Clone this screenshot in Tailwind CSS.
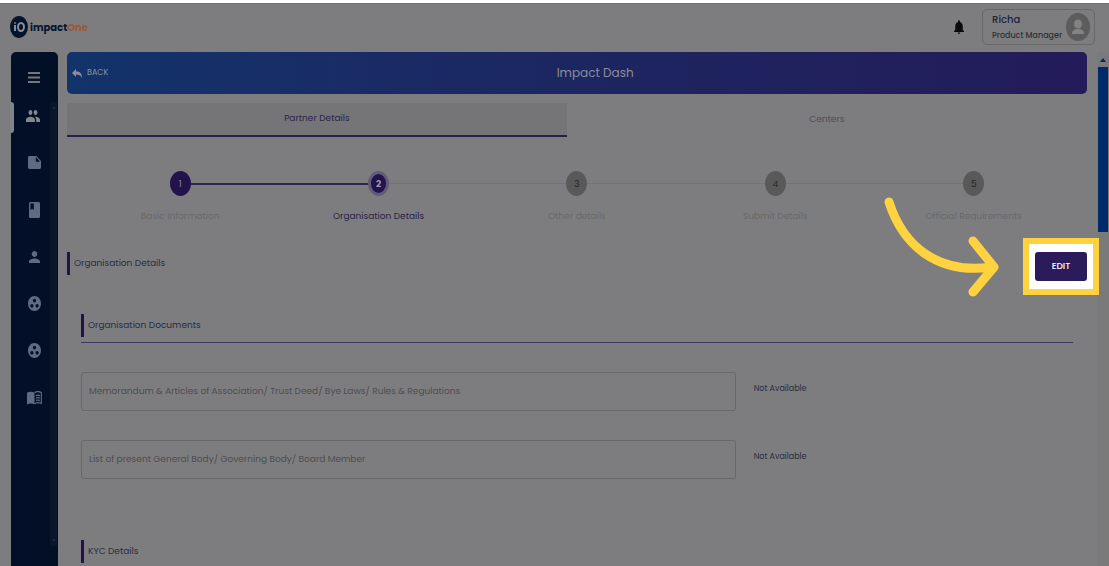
<!DOCTYPE html>
<html lang="en">
<head>
    <meta charset="UTF-8" />
    <meta name="viewport" content="width=device-width, initial-scale=1.0"/>
    <title>impactOne - Impact Dash</title>
    <script src="https://cdn.jsdelivr.net/npm/@tailwindcss/browser@4"></script>
    <style>
        body { font-family: Poppins, Roboto, sans-serif; }
    </style>
</head>
<body class="flex h-screen flex-col overflow-hidden border-t-3 border-white bg-[#7d7d7f] text-[#2a2d3f]">

<!-- Header -->
<header class="flex h-[49px] shrink-0 items-center justify-between border-t border-[#727274] pr-[14px] pb-[2px] pl-[10px]">
    <a href="#" class="flex items-center gap-[2px]">
        <svg class="h-[22px] w-[18px]" viewBox="0 0 18 22" preserveAspectRatio="none" aria-hidden="true">
            <ellipse cx="9" cy="11" rx="9" ry="11" fill="#03142e"/>
            <rect x="4" y="9" width="2" height="6" fill="#8b8d93"/>
            <rect x="4" y="6" width="2" height="2" fill="#8a5030"/>
            <ellipse cx="11" cy="11" rx="3" ry="4" fill="none" stroke="#8b8d93" stroke-width="2"/>
        </svg>
        <span class="text-[10px] font-bold text-[#061530]">impact<span class="text-[#9c583a]">One</span></span>
    </a>
    <div class="flex items-center gap-[18px]">
        <button type="button" aria-label="Notifications">
            <svg class="h-[14px] w-[10px]" viewBox="4 2 16 20" preserveAspectRatio="none" fill="#0b0b0d">
                <path d="M12 22c1.1 0 2-.9 2-2h-4c0 1.1.9 2 2 2zm6-6v-5c0-3.07-1.63-5.64-4.5-6.32V4c0-.83-.67-1.5-1.5-1.5s-1.500.67-1.500 1.500v.68C7.640 5.360 6 7.920 6 11v5l-2 2v1h16v-1l-2-2z"/>
            </svg>
        </button>
        <button type="button" class="flex h-[36px] items-center gap-[4px] rounded-[5px] border border-[#68686a] pr-[4px] pl-[9px] text-left">
            <span class="flex flex-col gap-[3px] leading-[13px]">
                <span class="text-[10px] font-medium text-[#20233c]">Richa</span>
                <span class="text-[8px] font-medium text-[#303034]">Product Manager</span>
            </span>
            <svg class="h-[28px] w-[24px]" viewBox="0 0 24 28" aria-hidden="true">
                <ellipse cx="12" cy="14" rx="12" ry="14" fill="#5c5c5d"/>
                <ellipse cx="12" cy="11" rx="4" ry="4.500" fill="#828283"/>
                <path d="M6 21v-1c0-2.500 3-4 6-4s6 1.500 6 4v1z" fill="#828283"/>
            </svg>
        </button>
    </div>
</header>

<div class="flex min-h-0 flex-1">
    <!-- Sidebar -->
    <nav class="relative ml-[11px] flex w-[47px] shrink-0 flex-col items-center rounded-t-[5px] bg-[#020f26] pr-px text-[#5d6b85]">
        <button type="button" aria-label="Menu" class="flex h-[40px] items-end justify-center pb-[9px]">
            <svg class="h-[11px] w-[12px]" viewBox="0 0 12 11" stroke="#74777f" stroke-width="2"><path d="M0 1h12M0 5.500h12M0 10h12"/></svg>
        </button>
        <a href="#" aria-label="Partners" class="flex h-[47px] items-center pr-[2px] text-[#85888d]">
            <svg class="h-[12px] w-[14px]" viewBox="1 5 22 14" preserveAspectRatio="none" fill="currentColor">
                <path d="M16 11c1.660 0 2.990-1.340 2.990-3S17.660 5 16 5s-3 1.340-3 3 1.340 3 3 3zm-8 0c1.660 0 2.990-1.340 2.990-3S9.660 5 8 5 5 6.340 5 8s1.340 3 3 3zm0 2c-2.330 0-7 1.170-7 3.500V19h14v-2.500c0-2.330-4.670-3.500-7-3.500zm8 0c-.29 0-.62.020-.97.050 1.160.84 1.970 1.970 1.970 3.450V19h6v-2.500c0-2.330-4.670-3.500-7-3.500z"/>
            </svg>
        </a>
        <a href="#" aria-label="Notes" class="flex h-[47px] items-center">
            <svg class="h-[13px] w-[13px]" viewBox="2 3 20 18" preserveAspectRatio="none" fill="currentColor">
                <path d="M15 3H4c-1.100 0-2 .9-2 2v14c0 1.100.9 2 2 2h16c1.100 0 2-.9 2-2v-9l-7-7zm-1 8V4.500l6.500 6.500H14z"/>
            </svg>
        </a>
        <a href="#" aria-label="Book" class="flex h-[47px] items-center">
            <svg class="h-[16px] w-[11px]" viewBox="4 2 16 20" preserveAspectRatio="none" fill="currentColor">
                <path d="M18 2H6c-1.100 0-2 .9-2 2v16c0 1.100.9 2 2 2h12c1.100 0 2-.9 2-2V4c0-1.100-.9-2-2-2zM6 4h5v8l-2.500-1.500L6 12V4z"/>
            </svg>
        </a>
        <a href="#" aria-label="Profile" class="flex h-[47px] items-center">
            <svg class="h-[12px] w-[11px]" viewBox="4 4 16 16" preserveAspectRatio="none" fill="currentColor">
                <path d="M12 12c2.210 0 4-1.790 4-4s-1.790-4-4-4-4 1.790-4 4 1.790 4 4 4zm0 2c-2.670 0-8 1.340-8 4v2h16v-2c0-2.660-5.330-4-8-4z"/>
            </svg>
        </a>
        <a href="#" aria-label="Groups" class="flex h-[47px] items-center">
            <svg class="h-[15px] w-[13px]" viewBox="2 2 20 20" preserveAspectRatio="none" fill="currentColor">
                <path d="M12 2C6.480 2 2 6.480 2 12s4.480 10 10 10 10-4.480 10-10S17.520 2 12 2zM8 17.500c-1.380 0-2.500-1.120-2.500-2.500s1.120-2.500 2.500-2.500 2.500 1.120 2.500 2.500-1.120 2.500-2.500 2.500zM9.500 8c0-1.380 1.120-2.500 2.500-2.500s2.500 1.120 2.500 2.500-1.120 2.500-2.500 2.500S9.500 9.380 9.500 8zm6.500 9.500c-1.380 0-2.500-1.120-2.500-2.500s1.120-2.500 2.500-2.500 2.500 1.120 2.500 2.500-1.120 2.500-2.500 2.500z"/>
            </svg>
        </a>
        <a href="#" aria-label="Teams" class="flex h-[47px] items-center">
            <svg class="h-[15px] w-[13px]" viewBox="2 2 20 20" preserveAspectRatio="none" fill="currentColor">
                <path d="M12 2C6.480 2 2 6.480 2 12s4.480 10 10 10 10-4.480 10-10S17.520 2 12 2zM8 17.500c-1.380 0-2.500-1.120-2.500-2.500s1.120-2.500 2.500-2.500 2.500 1.120 2.500 2.500-1.120 2.500-2.500 2.500zM9.500 8c0-1.380 1.120-2.500 2.500-2.500s2.500 1.120 2.500 2.500-1.120 2.500-2.500 2.500S9.500 9.380 9.500 8zm6.500 9.500c-1.380 0-2.500-1.120-2.500-2.500s1.120-2.500 2.500-2.500 2.500 1.120 2.500 2.500-1.120 2.500-2.500 2.500z"/>
            </svg>
        </a>
        <a href="#" aria-label="Guide" class="flex h-[47px] items-center">
            <svg class="h-[14px] w-[15px]" viewBox="1 4 22 17" preserveAspectRatio="none">
                <path d="M1 6c3-1.600 8-1.600 11 0v14.500c-3-1.600-8-1.600-11 0z" fill="currentColor"/>
                <path d="M12 6c3-1.500 7-1.500 10 0v13c-3-1-7-1-10 .5M14 9.500c2-.7 4-.7 6 0M14 12.500c2-.7 4-.7 6 0M14 15.500c2-.7 4-.7 6 0" fill="none" stroke="currentColor" stroke-width="1.600"/>
            </svg>
        </a>
        <!-- active marker and inner scrollbar -->
        <span class="absolute top-[50px] left-[-1px] h-[31px] w-[4px] rounded-r-[3px] bg-[#7f848a]"></span>
        <span class="absolute top-[50px] right-px bottom-[20px] flex w-[7px] flex-col items-center justify-between bg-[#0b1529] py-[4px]">
            <svg class="h-[3px] w-[4px]" viewBox="0 0 4 3" fill="#0b2a5c"><path d="M0 3l2-3 2 3z"/></svg>
            <svg class="h-[3px] w-[4px]" viewBox="0 0 4 3" fill="#0b2a5c"><path d="M0 0l2 3 2-3z"/></svg>
        </span>
    </nav>

    <!-- Content -->
    <main class="ml-[9px] min-w-0 flex-1 text-[9px]">
        <div class="flex h-[42px] items-center rounded-[5px] bg-linear-to-r from-[#12336b] via-[#1c2660] to-[#231b5a] px-[5px] text-[#8b8d9c]">
            <button type="button" class="flex items-center gap-[5px] text-[8px]">
                <svg class="h-[9px] w-[10px]" viewBox="0 0 10 9" fill="currentColor" aria-hidden="true"><path d="M0 4l4-4v2.300c4 .2 6 2.500 6 6.700-1.200-2.500-3-3.400-6-3.400V8z"/></svg>
                BACK
            </button>
            <h1 class="flex-1 text-center text-[12px]">Impact Dash</h1>
        </div>

        <div class="mt-[9px] flex h-[34px]">
            <button type="button" class="w-[49%] border-b-2 border-[#2a1d50] bg-[#757577] text-[#2c2450]">Partner Details</button>
            <button type="button" class="flex-1 text-[#4f4f54]">Centers</button>
        </div>

        <ol class="mt-[34px] grid grid-cols-5 px-[14px] text-center leading-[16px] text-[#68686a]">
            <li class="relative flex flex-col items-center gap-[12px]">
                <span class="absolute top-[12px] left-1/2 h-[2px] w-full bg-[#2f2551]"></span>
                <span class="relative flex h-[25px] w-[21px] items-center justify-center rounded-[50%] bg-[#23134c] text-[#8b8798]">1</span>
                Basic Information
            </li>
            <li class="relative flex flex-col items-center gap-[12px] text-[#2a2247]">
                <span class="absolute top-[12px] left-1/2 h-px w-full bg-[#737376]"></span>
                <span class="relative flex h-[25px] w-[21px] items-center justify-center rounded-[50%] border-3 border-[#625c78] bg-[#23134c] font-bold text-[#9a97a6]">2</span>
                Organisation Details
            </li>
            <li class="relative flex flex-col items-center gap-[12px]">
                <span class="absolute top-[12px] left-1/2 h-px w-full bg-[#737376]"></span>
                <span class="relative flex h-[25px] w-[21px] items-center justify-center rounded-[50%] bg-[#59595a] text-[#252527]">3</span>
                Other details
            </li>
            <li class="relative flex flex-col items-center gap-[12px]">
                <span class="absolute top-[12px] left-1/2 h-px w-full bg-[#737376]"></span>
                <span class="relative flex h-[25px] w-[21px] items-center justify-center rounded-[50%] bg-[#59595a] text-[#252527]">4</span>
                Submit Details
            </li>
            <li class="relative flex flex-col items-center gap-[12px]">
                <span class="relative flex h-[25px] w-[21px] items-center justify-center rounded-[50%] bg-[#59595a] text-[#252527]">5</span>
                Official Requirements
            </li>
        </ol>

        <div class="mt-[28px] flex items-start justify-between">
            <h2 class="border-l-3 border-[#23134c] pl-[4px] leading-[23px]">Organisation Details</h2>
            <div class="relative">
                <span class="absolute -inset-x-[12px] -inset-y-[14px] border-[6px] border-[#ffd23f] bg-white"></span>
                <button type="button" class="relative block h-[29px] w-[52px] rounded-[3px] bg-[#2b1b5a] font-medium text-white">EDIT</button>
                <svg class="absolute top-[-57px] right-[87px] h-[105px] w-[120px]" viewBox="880 195 120 105" fill="none" stroke="#ffd23f" stroke-width="9" stroke-linecap="round" stroke-linejoin="round" aria-hidden="true">
                    <path d="M889 202C903 246 938 275 992 267"/>
                    <path d="M973 241L994 267L973 292"/>
                </svg>
            </div>
        </div>

        <section class="mt-[33px] px-[14px]">
            <div class="border-b border-[#3b3560] pb-[5px]">
                <h3 class="border-l-3 border-[#23134c] pl-[4px] leading-[23px]">Organisation Documents</h3>
            </div>
            <div class="mt-[29px] grid grid-cols-[66fr_34fr] gap-y-[29px]">
                <input type="text" readonly aria-label="Memorandum" placeholder="Memorandum &amp; Articles of Association/ Trust Deed/ Bye Laws/ Rules &amp; Regulations" class="h-[39px] rounded-[3px] border border-[#68686a] px-[7px] placeholder:text-[#4d4d50]"/>
                <p class="pt-[10px] pl-[18px] text-[8px] leading-[14px]">Not Available</p>
                <input type="text" readonly aria-label="Board members" placeholder="List of present General Body/ Governing Body/ Board Member" class="h-[39px] rounded-[3px] border border-[#68686a] px-[7px] placeholder:text-[#4d4d50]"/>
                <p class="pt-[10px] pl-[18px] text-[8px] leading-[14px]">Not Available</p>
            </div>
        </section>

        <section class="mt-[61px] px-[14px]">
            <h3 class="border-l-3 border-[#23134c] pl-[4px] leading-[23px]">KYC Details</h3>
        </section>
    </main>

    <!-- Page scrollbar -->
    <div class="ml-[10px] flex w-[12px] shrink-0 flex-col items-center bg-[#7a7a7a]">
        <svg class="mt-[6px] mb-[5px] h-[4px] w-[6px]" viewBox="0 0 6 4" fill="#0a2560"><path d="M0 4l3-4 3 4z"/></svg>
        <div class="h-[165px] w-[10px] bg-[#002b6b]"></div>
    </div>
</div>
</body>
</html>
